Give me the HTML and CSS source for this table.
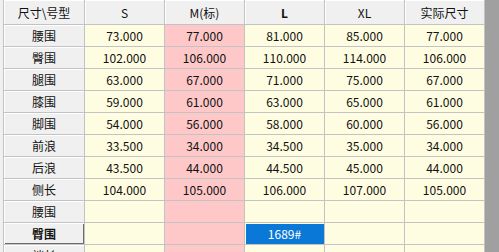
FILE: index.html
```
<!DOCTYPE html>
<html>
<head>
<meta charset="utf-8">
<link rel="stylesheet" href="styles.css">
</head>
<body>
<div class="view">
  <div class="grid">
    <div class="hd corner">尺寸\号型</div>
    <div class="hd">S</div>
    <div class="hd">M(标)</div>
    <div class="hd bold">L</div>
    <div class="hd">XL</div>
    <div class="hd">实际尺寸</div>

    <div class="rh">腰围</div><div class="c">73.000</div><div class="c m">77.000</div><div class="c">81.000</div><div class="c">85.000</div><div class="c">77.000</div>
    <div class="rh">臀围</div><div class="c">102.000</div><div class="c m">106.000</div><div class="c">110.000</div><div class="c">114.000</div><div class="c">106.000</div>
    <div class="rh">腿围</div><div class="c">63.000</div><div class="c m">67.000</div><div class="c">71.000</div><div class="c">75.000</div><div class="c">67.000</div>
    <div class="rh">膝围</div><div class="c">59.000</div><div class="c m">61.000</div><div class="c">63.000</div><div class="c">65.000</div><div class="c">61.000</div>
    <div class="rh">脚围</div><div class="c">54.000</div><div class="c m">56.000</div><div class="c">58.000</div><div class="c">60.000</div><div class="c">56.000</div>
    <div class="rh">前浪</div><div class="c">33.500</div><div class="c m">34.000</div><div class="c">34.500</div><div class="c">35.000</div><div class="c">34.000</div>
    <div class="rh">后浪</div><div class="c">43.500</div><div class="c m">44.000</div><div class="c">44.500</div><div class="c">45.000</div><div class="c">44.000</div>
    <div class="rh">侧长</div><div class="c">104.000</div><div class="c m">105.000</div><div class="c">106.000</div><div class="c">107.000</div><div class="c">105.000</div>
    <div class="rh">腰围</div><div class="c"></div><div class="c m"></div><div class="c"></div><div class="c"></div><div class="c"></div>
    <div class="rh cur">臀围</div><div class="c"></div><div class="c m"></div><div class="c"><span class="sel">1689#</span></div><div class="c"></div><div class="c"></div>
    <div class="rh">裆长</div><div class="c"></div><div class="c m"></div><div class="c"></div><div class="c"></div><div class="c"></div>
  </div>
  <div class="filler"></div>
</div>
</body>
</html>
```
FILE: styles.css
```
html, body {
  margin: 0;
  padding: 0;
  overflow: hidden;
}
body {
  width: 499px;
  height: 252px;
  background: #f0f0f0;
  font-family: "Noto Sans CJK SC", "Noto Sans", sans-serif;
  font-size: 12px;
  color: #111;
}
.view {
  display: flex;
  height: 252px;
  padding-left: 3px;
}
.grid {
  display: grid;
  grid-template-columns: 82px repeat(5, 80px);
  grid-template-rows: 25px;
  grid-auto-rows: 22px;
  align-content: start;
  flex: none;
}
.filler {
  flex: 1;
  background: #a0a0a0;
}
.hd, .rh, .c {
  box-sizing: border-box;
  border-right: 1px solid #c3c3c3;
  border-bottom: 1px solid #c3c3c3;
  display: flex;
  align-items: center;
  justify-content: center;
  line-height: 1;
  white-space: nowrap;
}
.hd {
  background: #f0f0f0;
  box-shadow: inset 1px 1px 0 #ffffff;
  padding-top: 1px;
}
.corner, .rh {
  border-left: 1px solid #c3c3c3;
}
.bold {
  font-weight: bold;
}
.rh {
  background: #f0f0f0;
  box-shadow: inset 1px 1px 0 #ffffff;
}
.rh.cur {
  font-weight: bold;
  box-shadow: inset 1px 1px 0 #ffffff, inset -1px -1px 0 #6d6d6d;
}
.c {
  background: #fffde1;
}
.c.m {
  background: #fec8c8;
}
.sel {
  box-sizing: border-box;
  width: 78px;
  height: 20px;
  background: #0a78d7;
  color: #fff;
  display: flex;
  align-items: center;
  justify-content: center;
}
```
